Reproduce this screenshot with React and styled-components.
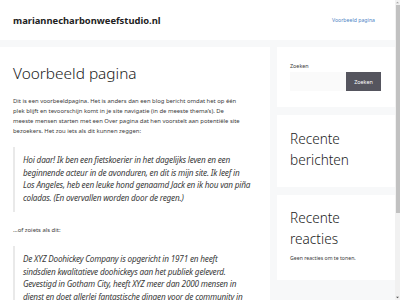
import styled, { createGlobalStyle } from "styled-components";

const Global = createGlobalStyle`
  html { background: #f7f8f9; }
  body {
    margin: 0;
    padding-right: 5px;
    background: #f7f8f9;
    font-family: "Noto Sans", sans-serif;
    color: #3a3a3a;
  }
`;

const Header = styled.header`
  background: #fff;
  height: 40px;
  display: flex;
  align-items: center;
  justify-content: space-between;
  padding: 0 20px 0 13px;
`;

const SiteTitle = styled.div`
  font-size: 9.4px;
  font-weight: 700;
  color: #222;
`;

const NavLink = styled.a`
  font-size: 5.2px;
  color: #4f86c6;
  text-decoration: none;
`;

const Container = styled.div`
  display: flex;
  gap: 7px;
  padding-top: 7px;
  align-items: flex-start;
`;

const Main = styled.main`
  width: 270px;
  flex-shrink: 0;
  background: #fff;
  padding: 16px 13px 20px;
  box-sizing: border-box;
  overflow: hidden;
`;

const Title = styled.h1`
  margin: 0 0 11px;
  font-size: 15.4px;
  font-weight: 300;
  line-height: 22px;
  color: #222;
`;

const Para = styled.p`
  margin: 0;
  font-size: 5.9px;
  line-height: 10px;
  white-space: nowrap;
`;

const Quote = styled.blockquote`
  margin: ${(p) => p.$mt}px 0 0;
  border-left: 2px solid #e9e9e9;
  padding: 7px 0 7px 8px;
  font-size: 8.2px;
  letter-spacing: -0.2px;
  line-height: 12.7px;
  font-style: italic;
`;

const Small = styled(Para)`
  margin-top: 13px;
`;

const Sidebar = styled.aside`
  flex: 1;
  display: flex;
  flex-direction: column;
  gap: 8px;
`;

const Widget = styled.section`
  background: #fff;
  padding: ${(p) => p.$pad};
`;

const Label = styled.div`
  font-size: 5.4px;
  line-height: 9px;
  margin-bottom: 1px;
`;

const SearchRow = styled.div`
  display: flex;
  height: 19px;
`;

const Input = styled.div`
  width: 56px;
  background: #fafafa;
`;

const Button = styled.button`
  width: 35px;
  border: 0;
  background: #55555e;
  color: #fff;
  font-family: "Noto Sans", sans-serif;
  font-size: 5.4px;
  padding: 0;
`;

const WidgetTitle = styled.h2`
  margin: 0;
  font-size: 13.6px;
  font-weight: 300;
  line-height: 21px;
  color: #222;
`;

const Note = styled.p`
  margin: 5px 0 0;
  font-size: 5.2px;
  line-height: 9px;
`;

/* the page's scrollbar, drawn over the right edge */
const Scrollbar = styled.div`
  position: fixed;
  top: 0;
  right: 0;
  width: 5px;
  height: 100vh;
  background: #f1f1f1;
  display: flex;
  flex-direction: column;
  align-items: center;
`;

const Arrow = styled.svg`
  width: 5px;
  height: 5px;
  flex-shrink: 0;
`;

const Thumb = styled.div`
  width: 4px;
  height: 208px;
  background: #c1c1c1;
`;

const Track = styled.div`
  flex: 1;
`;

const Lines = ({ lines }) =>
  lines.map((l, i) => (
    <span key={i}>
      {l}
      {i < lines.length - 1 && <br />}
    </span>
  ));

const intro = [
  "Dit is een voorbeeldpagina. Het is anders dan een blog bericht omdat het op één",
  "plek blijft en tevoorschijn komt in je site navigatie (in de meeste thema’s). De",
  "meeste mensen starten met een Over pagina dat hen voorstelt aan potentiële site",
  "bezoekers. Het zou iets als dit kunnen zeggen:",
];

const quote1 = [
  "Hoi daar! Ik ben een fietskoerier in het dagelijks leven en een",
  "beginnende acteur in de avonduren, en dit is mijn site. Ik leef in",
  "Los Angeles, heb een leuke hond genaamd Jack en ik hou van piña",
  "coladas. (En overvallen worden door de regen.)",
];

const quote2 = [
  "De XYZ Doohickey Company is opgericht in 1971 en heeft",
  "sindsdien kwalitatieve doohickeys aan het publiek geleverd.",
  "Gevestigd in Gotham City, heeft XYZ meer dan 2000 mensen in",
  "dienst en doet allerlei fantastische dingen voor de community in",
  "Gotham.",
];

export default function App() {
  return (
    <>
      <Global />
      <Header>
        <SiteTitle>mariannecharbonweefstudio.nl</SiteTitle>
        <NavLink href="#">Voorbeeld pagina</NavLink>
      </Header>
      <Container>
        <Main>
          <Title>Voorbeeld pagina</Title>
          <Para>
            <Lines lines={intro} />
          </Para>
          <Quote $mt={11}>
            <Lines lines={quote1} />
          </Quote>
          <Small>…of zoiets als dit:</Small>
          <Quote $mt={11}>
            <Lines lines={quote2} />
          </Quote>
        </Main>
        <Sidebar>
          <Widget $pad="15px 13px 16px">
            <Label>Zoeken</Label>
            <SearchRow>
              <Input />
              <Button>Zoeken</Button>
            </SearchRow>
          </Widget>
          <Widget $pad="13px 13px 17px">
            <WidgetTitle>Recente berichten</WidgetTitle>
          </Widget>
          <Widget $pad="12px 13px 17px">
            <WidgetTitle>Recente reacties</WidgetTitle>
            <Note>Geen reacties om te tonen.</Note>
          </Widget>
        </Sidebar>
      </Container>
      <Scrollbar>
        <Arrow viewBox="0 0 5 5">
          <path d="M1 3.2 L2.5 1.8 L4 3.2 Z" fill="#a3a3a3" />
        </Arrow>
        <Thumb />
        <Track />
        <Arrow viewBox="0 0 5 5">
          <path d="M1 1.8 L2.5 3.2 L4 1.8 Z" fill="#505050" />
        </Arrow>
      </Scrollbar>
    </>
  );
}
